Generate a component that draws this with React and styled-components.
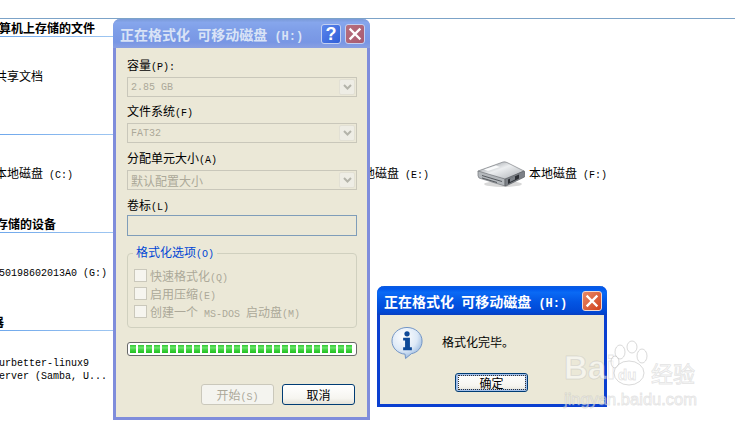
import styled, { createGlobalStyle } from "styled-components";

const GlobalStyle = createGlobalStyle`
  html, body {
    margin: 0;
    background: #fff;
  }
  * {
    box-sizing: border-box;
  }
`;

const CJK = `"Noto Sans CJK SC", "Liberation Sans", sans-serif`;

const Page = styled.div`
  position: relative;
  width: 735px;
  height: 422px;
  overflow: hidden;
  background: #fff;
  font-family: ${CJK};
  font-size: 12px;
  color: #000;
`;

// half-width latin, the CJK font's own latin is too wide or too narrow
const L = styled.span`
  font-family: "Liberation Mono", monospace;
  font-size: ${(p) => p.$size || 10}px;
  white-space: pre;
`;

const Explorer = styled.div`
  padding-top: 18px;
`;

const TopRule = styled.div`
  height: 1px;
  background: #7ca3c8;
`;

const Section = styled.section`
  height: 98px;
  display: flex;
  flex-direction: column;
`;

const SectionTitle = styled.div`
  height: 17px;
  line-height: 17px;
  font-weight: 700;
  white-space: nowrap;
  margin-left: ${(p) => p.$shift}px;
`;

const SectionRule = styled.div`
  height: 1px;
  width: 340px;
  background: linear-gradient(90deg, #6fa8ec 0%, #a8ccf2 40%, #ffffff 100%);
`;

const Items = styled.div`
  flex: 1;
  display: flex;
  align-items: center;
  padding-bottom: 3px;
  margin-left: ${(p) => p.$shift}px;
`;

const Item = styled.div`
  width: 178px;
  flex: none;
  display: flex;
  align-items: center;
  gap: 4px;
  white-space: nowrap;
`;

const ItemIcon = styled.div`
  width: 48px;
  height: 26px;
  flex: none;
`;

const ItemName = styled.div`
  line-height: 13px;
`;

const NameLine = styled(L)`
  display: block;
  line-height: 13px;
`;

const Win = styled.div`
  position: absolute;
  left: ${(p) => p.$x}px;
  top: ${(p) => p.$y}px;
  width: ${(p) => p.$w}px;
  height: ${(p) => p.$h}px;
  border-radius: 7px 7px 0 0;
  border: 3px solid ${(p) => (p.$active ? "#0a3fd0" : "#7f8ddb")};
  border-top: 0;
  background: #ebe8d7;
  display: flex;
  flex-direction: column;
`;

const TitleBar = styled.div`
  height: ${(p) => p.$h}px;
  margin: 0 -3px;
  padding: 0 5px 0 7px;
  border-radius: 7px 7px 0 0;
  display: flex;
  align-items: center;
  justify-content: space-between;
  background: ${(p) =>
    p.$active
      ? "linear-gradient(180deg, #0a5be0 0%, #0058ee 10%, #0a6af5 22%, #0355e3 55%, #0148d4 90%, #0a3fc0 100%)"
      : "linear-gradient(180deg, #7a9ad8 0%, #86a6ec 12%, #7e9ee8 40%, #7896e4 80%, #8aa0e2 100%)"};
`;

const TitleText = styled.div`
  font-size: 14px;
  font-weight: 700;
  white-space: nowrap;
  color: ${(p) => (p.$active ? "#ffffff" : "#d9e3f6")};
`;

const TitleButtons = styled.div`
  display: flex;
  gap: 4px;
`;

const CapButton = styled.div`
  width: 20px;
  height: 20px;
  border-radius: 3px;
  border: 1px solid ${(p) => (p.$active ? "#f0d8d0" : "#c4d0f0")};
  display: flex;
  align-items: center;
  justify-content: center;
  background: ${(p) => p.$bg};
  color: #fff;
`;

const HelpMark = styled.span`
  font-family: "Liberation Sans", sans-serif;
  font-weight: 700;
  font-size: 18px;
  line-height: 18px;
`;

const Body = styled.div`
  flex: 1;
  padding: 10px 10px 0 11px;
  display: flex;
  flex-direction: column;
`;

const Field = styled.div`
  display: flex;
  flex-direction: column;
  gap: ${(p) => p.$gap || 5}px;
  margin-bottom: ${(p) => p.$mb ?? 7}px;
`;

const Label = styled.div`
  height: 14px;
  line-height: 14px;
`;

const Combo = styled.div`
  height: 20px;
  border: 1px solid #c9c7ba;
  display: flex;
  align-items: center;
  justify-content: space-between;
  padding: 0 1px 0 3px;
  color: #aca899;
`;

const ComboArrow = styled.div`
  width: 16px;
  height: 16px;
  border-radius: 2px;
  background: #eeede5;
  border: 1px solid #e2e0d4;
  display: flex;
  align-items: center;
  justify-content: center;
`;

const TextBox = styled.div`
  height: 21px;
  border: 1px solid #7f9db9;
`;

const Group = styled.fieldset`
  margin: 9px 0 0;
  padding: 7px 6px 0;
  height: 83px;
  border: 1px solid #d0d0bf;
  border-radius: 4px;
  display: flex;
  flex-direction: column;
  gap: 5px;
`;

const Legend = styled.legend`
  margin-left: -1px;
  padding: 0 3px;
  line-height: 14px;
  color: #0046d5;
`;

const Check = styled.div`
  height: 13px;
  display: flex;
  align-items: center;
  gap: 3px;
  color: #aca899;
  white-space: nowrap;
`;

const CheckBox = styled.div`
  width: 13px;
  height: 13px;
  background: #f6f5ef;
  border: 1px solid #cac8bb;
`;

const Progress = styled.div`
  margin-top: 14px;
  height: 14px;
  border: 1px solid #686868;
  border-radius: 3px;
  background: #fff;
  padding: 2px;
  display: flex;
  gap: 2px;
  overflow: hidden;
`;

const Chunk = styled.div`
  width: 6px;
  flex: none;
  background: linear-gradient(180deg, #2fc72f 0%, #6ee56e 35%, #3fd23f 60%, #22c022 100%);
`;

const Actions = styled.div`
  margin-top: 28px;
  display: flex;
  justify-content: flex-end;
  gap: 8px;
  padding-right: 2px;
`;

const Button = styled.div`
  width: 73px;
  height: ${(p) => p.$h || 21}px;
  border-radius: 3px;
  display: flex;
  align-items: center;
  justify-content: center;
  border: 1px solid ${(p) => (p.$disabled ? "#cac8bb" : "#003c74")};
  color: ${(p) => (p.$disabled ? "#aca899" : "#000")};
  background: ${(p) =>
    p.$disabled ? "#f4f4ef" : "linear-gradient(180deg, #ffffff 0%, #f6f5f0 70%, #e4e2d8 100%)"};
  box-shadow: ${(p) => (p.$focus ? "inset 0 0 0 2px #a4c0ea" : "none")};
`;

const FocusText = styled.div`
  width: 66px;
  height: 13px;
  line-height: 13px;
  text-align: center;
  outline: 1px dotted #333;
`;

const MessageRow = styled.div`
  display: flex;
  align-items: flex-start;
  gap: 18px;
  padding: 11px 0 0 11px;
`;

const MessageText = styled.div`
  margin-top: 7px;
  line-height: 17px;
`;

const MessageActions = styled.div`
  margin-top: 13px;
  padding-left: 75px;
`;

const Watermark = styled.div`
  position: absolute;
  left: 564px;
  top: 340px;
  width: 140px;
  pointer-events: none;
  color: rgba(255, 255, 255, 0.55);
  -webkit-text-stroke: 1px rgba(170, 170, 170, 0.3);
  font-family: "Liberation Sans", sans-serif;
`;

const MarkRow = styled.div`
  display: flex;
  align-items: flex-end;
  height: 46px;
`;

const MarkBai = styled.div`
  font-size: 33px;
  line-height: 36px;
  font-weight: 700;
  width: 46px;
`;

const Paw = styled.div`
  position: relative;
  width: 40px;
  height: 46px;
`;

const MarkDu = styled.div`
  position: absolute;
  left: 8px;
  bottom: 2px;
  font-size: 15px;
  line-height: 18px;
  font-weight: 700;
`;

const MarkJing = styled.div`
  font-family: ${CJK};
  font-size: 22px;
  line-height: 28px;
  margin-left: 1px;
  white-space: nowrap;
`;

const MarkUrl = styled.div`
  font-size: 16.500px;
  line-height: 18px;
  margin-top: 4px;
  white-space: nowrap;
`;

const DiskIcon = () => (
  <svg width="48" height="26" viewBox="0 0 48 26">
    <defs>
      <linearGradient id="disk-top" x1="0" y1="0" x2="1" y2="1">
        <stop offset="0" stopColor="#7f848a" />
        <stop offset="0.45" stopColor="#eceef0" />
        <stop offset="1" stopColor="#a9adb2" />
      </linearGradient>
    </defs>
    <ellipse cx="26" cy="23" rx="19" ry="3" fill="#d8d8d8" />
    <path d="M1 10 L26 1 Q28 .5 30 1.500 L47 10 L30 18 Q28 19 26 18 L2 12 Z" fill="url(#disk-top)" stroke="#6d7176" strokeWidth=".6" />
    <path d="M1 10 L28 18 L28 25 L2 17 Q.5 16 1 10 Z" fill="#b4b8bc" stroke="#64686d" strokeWidth=".6" />
    <path d="M28 18 L47 10 Q48 10 48 12 L47.500 16 L29 25 L28 25 Z" fill="#7c8086" stroke="#54585d" strokeWidth=".6" />
    <path d="M5 14.500 L25 20.500 M5 17 L20 21.500" stroke="#55595e" strokeWidth="1" />
    <path d="M31 18.500 L42 13.500 L42 17.500 L31 23 Z" fill="#2c2f34" />
    <path d="M33 17.500 L38 15 L38 18.500 L33 21 Z" fill="#7d8288" />
    <path d="M7 8.500 L19 4.500 L23 6 L11 10 Z" fill="#fafbfc" />
  </svg>
);

const InfoIcon = () => (
  <svg width="33" height="34" viewBox="0 0 34 34" style={{ display: "block" }}>
    <defs>
      <radialGradient id="info-bubble" cx="0.4" cy="0.3" r="0.8">
        <stop offset="0" stopColor="#ffffff" />
        <stop offset="0.55" stopColor="#dde9f7" />
        <stop offset="1" stopColor="#7ea6d6" />
      </radialGradient>
    </defs>
    <path
      d="M16.500 1 C25 1 32 7 32 15 C32 22 27 27 21 28 L15 33 L14.500 28.500 C7 28 1 22 1 15 C1 7 8 1 16.500 1 Z"
      fill="url(#info-bubble)"
      stroke="#6f93c4"
      strokeWidth="1"
    />
    <circle cx="16.500" cy="7.500" r="2.700" fill="#0f4a98" />
    <path d="M12.500 11.500 H19.500 V21.500 H21.500 V24.500 H12.500 V21.500 H14.500 V14.500 H12.500 Z" fill="#0f4a98" />
  </svg>
);

const CloseMark = () => (
  <svg width="14" height="14" viewBox="0 0 14 14">
    <path d="M2.500 2.500 L11.500 11.500 M11.500 2.500 L2.500 11.500" stroke="#fff" strokeWidth="2.400" strokeLinecap="square" />
  </svg>
);

const ArrowMark = () => (
  <svg width="9" height="6" viewBox="0 0 9 6">
    <path d="M1 1 L4.500 4.500 L8 1" fill="none" stroke="#b4b4aa" strokeWidth="2" />
  </svg>
);

const PawMark = () => (
  <svg width="40" height="46" viewBox="0 0 40 46" fill="rgba(255,255,255,.5)" stroke="rgba(170,170,170,.45)">
    <ellipse cx="10" cy="12" rx="5" ry="7" />
    <ellipse cx="22" cy="7" rx="5" ry="6" />
    <ellipse cx="32" cy="16" rx="5" ry="7" />
    <ellipse cx="5" cy="22" rx="4" ry="6" />
    <ellipse cx="19" cy="33" rx="15" ry="12" />
  </svg>
);

const drives = ["C", "D", "E", "F"];
const chunks = Array.from({ length: 28 }, (_, i) => i);

function DriveName({ letter }) {
  return (
    <ItemName>
      本地磁盘<L> ({letter}:)</L>
    </ItemName>
  );
}

export default function App() {
  return (
    <Page>
      <GlobalStyle />
      <Explorer>
        <TopRule />
        <Section>
          <SectionTitle $shift={-13}>计算机上存储的文件</SectionTitle>
          <SectionRule />
          <Items $shift={-57}>
            <Item>
              <ItemIcon />
              <ItemName>共享文档</ItemName>
            </Item>
          </Items>
        </Section>
        <Section>
          <SectionTitle $shift={-30}>硬盘</SectionTitle>
          <SectionRule />
          <Items $shift={-57}>
            {drives.map((d) => (
              <Item key={d}>
                <ItemIcon>
                  <DiskIcon />
                </ItemIcon>
                <DriveName letter={d} />
              </Item>
            ))}
          </Items>
        </Section>
        <Section>
          <SectionTitle $shift={-52}>有可移动存储的设备</SectionTitle>
          <SectionRule />
          <Items $shift={-53}>
            <Item>
              <ItemIcon />
              <ItemName>
                <L>50198602013A0 (G:)</L>
              </ItemName>
            </Item>
          </Items>
        </Section>
        <Section>
          <SectionTitle $shift={-56}>网络驱动器</SectionTitle>
          <SectionRule />
          <Items $shift={-53}>
            <Item>
              <ItemIcon />
              <ItemName>
                <NameLine>urbetter-linux9</NameLine>
                <NameLine>erver (Samba, U...</NameLine>
              </ItemName>
            </Item>
          </Items>
        </Section>
      </Explorer>

      <Win $x={113} $y={19} $w={257} $h={401}>
        <TitleBar $h={29}>
          <TitleText>
            正在格式化<L $size={12}> </L>可移动磁盘<L $size={12}> (H:)</L>
          </TitleText>
          <TitleButtons>
            <CapButton $bg="linear-gradient(135deg, #5b86ec, #2f5ed8)">
              <HelpMark>?</HelpMark>
            </CapButton>
            <CapButton $bg="linear-gradient(135deg, #b8707e, #a85a70)">
              <CloseMark />
            </CapButton>
          </TitleButtons>
        </TitleBar>
        <Body>
          <Field>
            <Label>
              容量<L>(P):</L>
            </Label>
            <Combo>
              <L>2.85 GB</L>
              <ComboArrow>
                <ArrowMark />
              </ComboArrow>
            </Combo>
          </Field>
          <Field $mb={8}>
            <Label>
              文件系统<L>(F)</L>
            </Label>
            <Combo>
              <L>FAT32</L>
              <ComboArrow>
                <ArrowMark />
              </ComboArrow>
            </Combo>
          </Field>
          <Field $mb={8}>
            <Label>
              分配单元大小<L>(A)</L>
            </Label>
            <Combo>
              默认配置大小
              <ComboArrow>
                <ArrowMark />
              </ComboArrow>
            </Combo>
          </Field>
          <Field $mb={0} $gap={3}>
            <Label>
              卷标<L>(L)</L>
            </Label>
            <TextBox />
          </Field>
          <Group>
            <Legend>
              格式化选项<L>(O)</L>
            </Legend>
            <Check>
              <CheckBox />
              <span>
                快速格式化<L>(Q)</L>
              </span>
            </Check>
            <Check>
              <CheckBox />
              <span>
                启用压缩<L>(E)</L>
              </span>
            </Check>
            <Check>
              <CheckBox />
              <span>
                创建一个<L> MS-DOS </L>启动盘<L>(M)</L>
              </span>
            </Check>
          </Group>
          <Progress>
            {chunks.map((i) => (
              <Chunk key={i} />
            ))}
          </Progress>
          <Actions>
            <Button $disabled>
              <span>
                开始<L>(S)</L>
              </span>
            </Button>
            <Button>取消</Button>
          </Actions>
        </Body>
      </Win>

      <Win $x={377} $y={286} $w={230} $h={121} $active>
        <TitleBar $h={29} $active>
          <TitleText $active>
            正在格式化<L $size={12}> </L>可移动磁盘<L $size={12}> (H:)</L>
          </TitleText>
          <CapButton $active $bg="linear-gradient(135deg, #e88a68, #d0401c)">
            <CloseMark />
          </CapButton>
        </TitleBar>
        <MessageRow>
          <InfoIcon />
          <MessageText>格式化完毕。</MessageText>
        </MessageRow>
        <MessageActions>
          <Button $focus $h={19}>
            <FocusText>确定</FocusText>
          </Button>
        </MessageActions>
      </Win>

      <Watermark>
        <MarkRow>
          <MarkBai>Bai</MarkBai>
          <Paw>
            <PawMark />
            <MarkDu>du</MarkDu>
          </Paw>
          <MarkJing>经验</MarkJing>
        </MarkRow>
        <MarkUrl>jingyan.baidu.com</MarkUrl>
      </Watermark>
    </Page>
  );
}
